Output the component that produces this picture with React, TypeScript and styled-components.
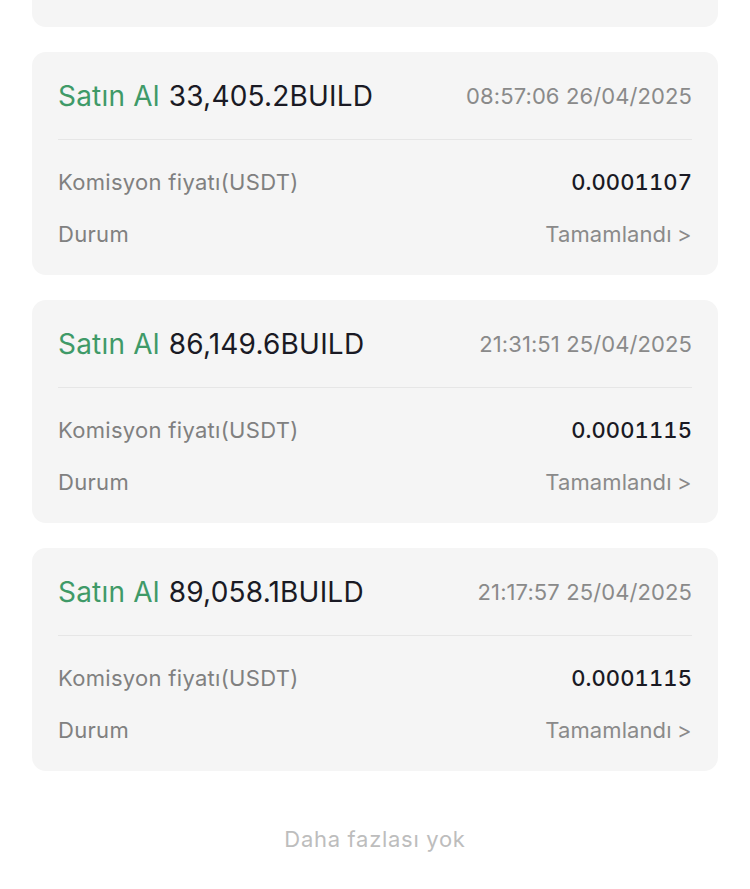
import React from 'react'
import styled, { createGlobalStyle } from 'styled-components'

interface Order {
  amount: string;
  time: string;
  price: string;
}

const orders: Order[] = [
  { amount: '33,405.2BUILD', time: '08:57:06 26/04/2025', price: '0.0001107' },
  { amount: '86,149.6BUILD', time: '21:31:51 25/04/2025', price: '0.0001115' },
  { amount: '89,058.1BUILD', time: '21:17:57 25/04/2025', price: '0.0001115' },
]

const GlobalStyle = createGlobalStyle`
  body {
    margin: 0;
    background: #FFFFFF;
    font-family: Inter, 'Noto Sans', sans-serif;
  }
`

const Page = styled.div`
  display: flex;
  flex-direction: column;
  gap: 25px;
  padding: 0 32px;
  margin-top: -60px;
`

const Card = styled.div`
  background: #F5F5F5;
  border-radius: 14px;
  padding: 0 26px;
`

const StubCard = styled(Card)`
  height: 87px;
`

const Header = styled.div`
  display: flex;
  align-items: center;
  justify-content: space-between;
  padding: 27px 0 26px;
  border-bottom: 1px solid #E6E6E6;
`

const Title = styled.div`
  font-size: 28px;
  line-height: 34px;
  color: #1A1A24;
  letter-spacing: 0.2px;
`

const Side = styled.span`
  color: #3F9A68;
  margin-right: 9px;
`

const Time = styled.div`
  font-size: 22px;
  line-height: 28px;
  color: #8A8A8A;
  letter-spacing: 0.1px;
`

const Body = styled.div`
  display: flex;
  flex-direction: column;
  gap: 24px;
  padding: 28px 0 27px;
`

const Row = styled.div`
  display: flex;
  justify-content: space-between;
  font-size: 22px;
  line-height: 28px;
`

const Label = styled.span`
  color: #808080;
  letter-spacing: 0.3px;
`

const Value = styled.span<{ $muted?: boolean }>`
  color: ${(p) => (p.$muted ? '#8A8A8A' : '#1A1A24')};
  font-weight: ${(p) => (p.$muted ? 400 : 500)};
  font-variant-numeric: tabular-nums;
  letter-spacing: 0.1px;
`

const Footer = styled.div`
  text-align: center;
  font-size: 22px;
  line-height: 28px;
  letter-spacing: 0.7px;
  color: #BDBDBD;
  padding: 29px 0 40px;
`

const App: React.FC = () => (
  <>
    <GlobalStyle />
    <Page>
      <StubCard />
      {orders.map((o) => (
        <Card key={o.time}>
          <Header>
            <Title>
              <Side>Satın Al</Side>
              {o.amount}
            </Title>
            <Time>{o.time}</Time>
          </Header>
          <Body>
            <Row>
              <Label>Komisyon fiyatı(USDT)</Label>
              <Value>{o.price}</Value>
            </Row>
            <Row>
              <Label>Durum</Label>
              <Value $muted>Tamamlandı &gt;</Value>
            </Row>
          </Body>
        </Card>
      ))}
      <Footer>Daha fazlası yok</Footer>
    </Page>
  </>
)

export default App
